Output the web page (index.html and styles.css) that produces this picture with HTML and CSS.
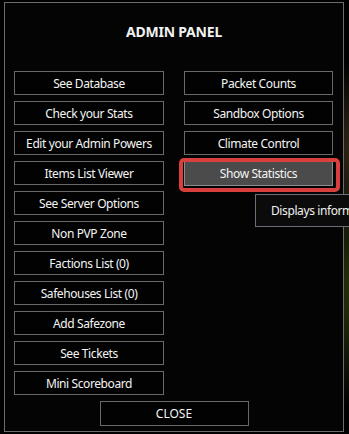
FILE: index.html
```html
<!DOCTYPE html>
<html lang="en">

<head>
    <meta charset="UTF-8">
    <meta name="viewport" content="width=device-width, initial-scale=1.0">
    <title>Admin Panel</title>
    <link rel="stylesheet" href="styles.css">
</head>

<body>
    <div class="panel">
        <h1 class="title">ADMIN PANEL</h1>

        <div class="columns">
            <div class="column">
                <button class="btn">See Database</button>
                <button class="btn">Check your Stats</button>
                <button class="btn">Edit your Admin Powers</button>
                <button class="btn">Items List Viewer</button>
                <button class="btn">See Server Options</button>
                <button class="btn">Non PVP Zone</button>
                <button class="btn">Factions List (0)</button>
                <button class="btn">Safehouses List (0)</button>
                <button class="btn">Add Safezone</button>
                <button class="btn">See Tickets</button>
                <button class="btn">Mini Scoreboard</button>
            </div>
            <div class="column">
                <button class="btn">Packet Counts</button>
                <button class="btn">Sandbox Options</button>
                <button class="btn">Climate Control</button>
                <div class="hover-wrap">
                    <button class="btn active">Show Statistics</button>
                    <div class="tooltip">Displays information about the server</div>
                </div>
            </div>
        </div>

        <div class="footer">
            <button class="btn close-btn">CLOSE</button>
        </div>
    </div>
</body>

</html>
```

FILE: styles.css
```css
/* General reset */

* {
    margin: 0;
    padding: 0;
    box-sizing: border-box;
}

html,
body {
    width: 349px;
    height: 434px;
    overflow: hidden;
}

body {
    font-family: "Noto Sans", sans-serif;
    color: #f2f2f2;
    background-color: #000;
    background-image:
        radial-gradient(ellipse 60px 120px at 360px 290px, rgba(60, 80, 20, 0.7), transparent),
        radial-gradient(ellipse 40px 90px at 355px 150px, rgba(90, 70, 40, 0.6), transparent);
}

.panel {
    width: 340px;
    height: 430px;
    margin: 2px 0 0 4px;
    border: 1px solid #6c6c6c;
    background-color: #040404;
    padding: 0 9px 3px 9px;
    display: flex;
    flex-direction: column;
}

.title {
    height: 68px;
    padding-top: 19px;
    font-size: 14px;
    font-weight: bold;
    text-align: center;
    letter-spacing: -0.2px;
}

.columns {
    display: flex;
    gap: 20px;
}

.column {
    width: 150px;
    display: flex;
    flex-direction: column;
    gap: 6px;
}

.column + .column {
    width: 149px;
}

.btn {
    height: 24px;
    width: 100%;
    border: 1px solid #696969;
    background-color: #020202;
    color: #f4f4f4;
    font-family: "Noto Sans", sans-serif;
    font-size: 12px;
    letter-spacing: -0.4px;
    cursor: pointer;
}

.hover-wrap {
    position: relative;
}

.btn.active {
    background-color: #4b4b4b;
    border-color: #8c8c8c;
    height: 25px;
}

.hover-wrap::before {
    content: "";
    position: absolute;
    left: -5px;
    top: -3px;
    right: -7px;
    bottom: -6px;
    border: 4px solid #d8403d;
    border-radius: 5px;
}

.tooltip {
    position: absolute;
    left: 71px;
    top: 33px;
    height: 33px;
    padding: 0 15px;
    line-height: 31px;
    white-space: nowrap;
    background-color: #0b0b0b;
    border: 1px solid #6d6d7c;
    font-size: 12px;
    letter-spacing: -0.4px;
}

.footer {
    display: flex;
    justify-content: center;
    margin-top: 6px;
}

.close-btn {
    width: 149px;
    height: 25px;
    letter-spacing: 0;
}
```
